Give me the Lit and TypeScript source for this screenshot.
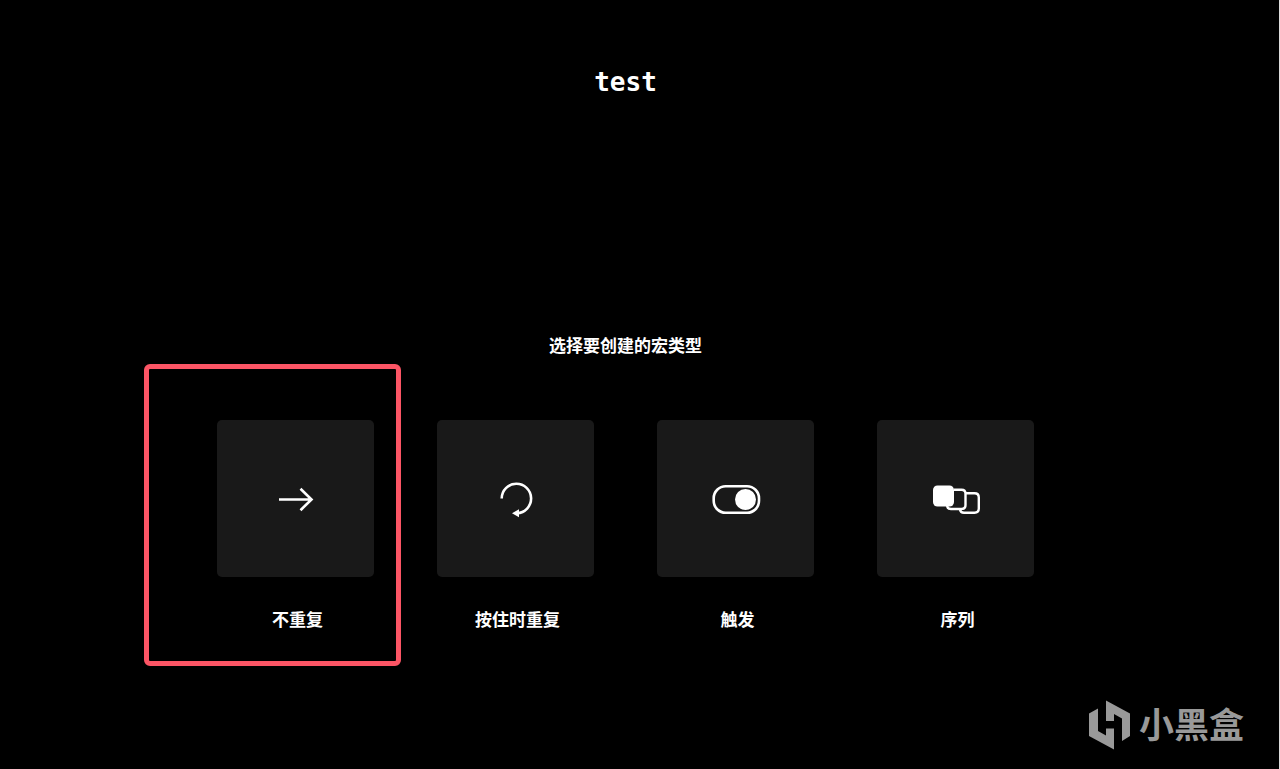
import { LitElement, html, css, svg } from "lit";
import { customElement } from "lit/decorators.js";

const arrowIcon = svg`<path d="M13 30.500H45.500M34.500 19.800L45.500 30.500L34.500 41.200" stroke-width="2.600"/>`;
const loopIcon = svg`
  <path d="M15.700 29.500A14.700 14.700 0 1 1 31 44.200" stroke-width="2.600"/>
  <path d="M26 44.300L33 40.300V48.300Z" fill="#fff" stroke="none"/>`;
const toggleIcon = svg`
  <rect x="7.700" y="17.200" width="45.300" height="26.600" rx="12" stroke-width="2.600"/>
  <circle cx="39.500" cy="30.500" r="10.500" fill="#fff" stroke="none"/>`;
const sequenceIcon = svg`
  <rect x="7" y="16.500" width="21" height="21" rx="4.500" fill="#fff" stroke="none"/>
  <path d="M28 20.700H35.500Q39.500 20.700 39.500 24.700V36Q39.500 40 35.500 40H25Q21.500 40 21 37" stroke-width="2.400"/>
  <path d="M40 24.300H48.500Q52.800 24.300 52.800 28.500V39.500Q52.800 43.700 48.500 43.700H38Q34.500 43.700 34 40.500" stroke-width="2.400"/>`;

const macroTypes = [
  { label: "不重复", icon: arrowIcon, marked: true },
  { label: "按住时重复", icon: loopIcon, marked: false },
  { label: "触发", icon: toggleIcon, marked: false },
  { label: "序列", icon: sequenceIcon, marked: false },
];

@customElement("app-root")
export class AppRoot extends LitElement {
  static styles = css`
    :host {
      display: block;
      background: #000;
      color: #fff;
      font-family: "Noto Sans CJK SC", sans-serif;
    }
    .page {
      position: relative;
      box-sizing: border-box;
      min-height: 100vh;
      padding: 64px 28px 103px 0;
      border-right: 1px solid #ddd;
      display: flex;
      flex-direction: column;
      align-items: center;
      justify-content: space-between;
    }
    .title {
      margin: 0;
      font: 700 26px/36px "DejaVu Sans Mono", monospace;
    }
    .picker {
      display: flex;
      flex-direction: column;
      align-items: center;
    }
    .prompt {
      margin: 0 0 63px;
      font-size: 17px;
      line-height: 24px;
      font-weight: 700;
    }
    .types {
      display: flex;
      gap: 63px;
    }
    .type {
      position: relative;
      display: flex;
      flex-direction: column;
      align-items: center;
      gap: 30px;
      padding: 0 0 35px;
      border: 0;
      background: none;
      color: inherit;
      font: 700 17px/24px "Noto Sans CJK SC", sans-serif;
      cursor: pointer;
    }
    .tile {
      display: flex;
      align-items: center;
      justify-content: center;
      width: 157px;
      height: 157px;
      border-radius: 5px;
      background: #191919;
    }
    .icon {
      width: 60px;
      height: 60px;
      fill: none;
      stroke: #fff;
    }
    .label {
      padding-left: 4px;
    }
    .marker {
      position: absolute;
      inset: -56px -27px 0 -73px;
      border: 5px solid #fc5565;
      border-radius: 6px;
      pointer-events: none;
    }
    .brand {
      position: absolute;
      right: 35px;
      bottom: 16px;
      display: flex;
      align-items: center;
      gap: 8px;
      color: #999;
      font-size: 35px;
      line-height: 52px;
      font-weight: 700;
    }
    .name {
      padding-bottom: 4px;
    }
    .logo {
      width: 42px;
      height: 50px;
      fill: #999;
    }
  `;

  render() {
    return html`
      <main class="page">
        <h1 class="title">test</h1>
        <section class="picker">
          <h2 class="prompt">选择要创建的宏类型</h2>
          <div class="types">
            ${macroTypes.map(
              (type) => html`
                <button class="type" type="button">
                  <span class="tile">
                    <svg class="icon" viewBox="0 0 60 60" aria-hidden="true">${type.icon}</svg>
                  </span>
                  <span class="label">${type.label}</span>
                  ${type.marked ? html`<span class="marker"></span>` : null}
                </button>
              `
            )}
          </div>
        </section>
        <div class="brand">
          <svg class="logo" viewBox="0 0 42 50" aria-hidden="true">
            <path d="M0 13.500L9 8.500V31L17 35.500V28.500H25V49.500L0 36Z" />
            <path d="M17 0.500L41 13.500V36L33 41V18.500L25 14V21H17Z" />
          </svg>
          <span class="name">小黑盒</span>
        </div>
      </main>
    `;
  }
}
